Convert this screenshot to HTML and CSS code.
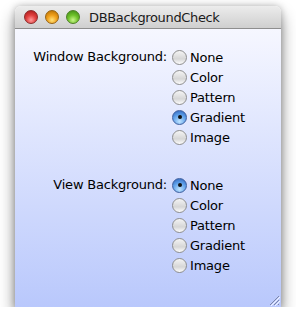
FILE: index.html
```html
<!DOCTYPE html>
<html lang="en">
<head>
    <meta charset="UTF-8">
    <title>DBBackgroundCheck</title>
    <link rel="stylesheet" href="styles.css">
</head>
<body>
    <div class="window">
        <div class="titlebar">
            <div class="lights">
                <span class="light red"></span>
                <span class="light yellow"></span>
                <span class="light green"></span>
            </div>
            <div class="title">DBBackgroundCheck</div>
        </div>

        <div class="content">
            <div class="group">
                <div class="label">Window Background:</div>
                <div class="options">
                    <div class="option"><span class="radio"></span>None</div>
                    <div class="option"><span class="radio"></span>Color</div>
                    <div class="option"><span class="radio"></span>Pattern</div>
                    <div class="option"><span class="radio on"></span>Gradient</div>
                    <div class="option"><span class="radio"></span>Image</div>
                </div>
            </div>

            <div class="group">
                <div class="label">View Background:</div>
                <div class="options">
                    <div class="option"><span class="radio on"></span>None</div>
                    <div class="option"><span class="radio"></span>Color</div>
                    <div class="option"><span class="radio"></span>Pattern</div>
                    <div class="option"><span class="radio"></span>Gradient</div>
                    <div class="option"><span class="radio"></span>Image</div>
                </div>
            </div>

            <svg class="grip" width="12" height="12" viewBox="0 0 12 12">
                <path d="M11 2 L2 11 M11 6 L6 11 M11 10 L10 11" stroke="#7d86a8" stroke-width="1"/>
                <path d="M12 3 L3 12 M12 7 L7 12" stroke="#f2f4ff" stroke-width="1"/>
            </svg>
        </div>
    </div>
</body>
</html>
```

FILE: styles.css
```css
body {
    margin: 0;
    background: #fff;
    font-family: "DejaVu Sans", sans-serif;
    font-size: 13px;
    letter-spacing: -0.2px;
    color: #000;
}
.window {
    margin: 6px 0 0 15px;
    width: 266px;
    border-radius: 6px 6px 0 0;
    box-shadow: 0 9px 16px rgba(0, 0, 0, 0.45), 0 0 7px rgba(0, 0, 0, 0.25);
}
.titlebar {
    height: 23px;
    display: flex;
    align-items: center;
    border-radius: 6px 6px 0 0;
    background: linear-gradient(#ececec, #cfcfcf);
    border-bottom: 1px solid #8e8e8e;
    box-sizing: border-box;
}
.lights {
    display: flex;
    gap: 7px;
    padding-left: 9px;
}
.light {
    width: 14px;
    height: 14px;
    border-radius: 50%;
    box-sizing: border-box;
}
.red {
    background: radial-gradient(circle at 50% 75%, #ff9a9a 0, #e0403f 45%, #a31414 100%);
    border: 1px solid #8a2a2a;
}
.yellow {
    background: radial-gradient(circle at 50% 75%, #ffe27a 0, #f0a01c 45%, #b06a00 100%);
    border: 1px solid #966314;
}
.green {
    background: radial-gradient(circle at 50% 75%, #c9f58a 0, #6fc22a 45%, #3a8412 100%);
    border: 1px solid #4e7f27;
}
.title {
    margin-left: 9px;
    font-size: 13px;
    letter-spacing: -0.35px;
    color: #1a1a1a;
}
.content {
    position: relative;
    height: 278px;
    padding-top: 18px;
    box-sizing: border-box;
    background: linear-gradient(#f6f7ff, #b9c8fc);
}
.group {
    display: grid;
    grid-template-columns: 157px auto;
    margin-bottom: 28px;
}
.label {
    text-align: right;
    padding-right: 5px;
    line-height: 20px;
}
.options {
    display: flex;
    flex-direction: column;
}
.option {
    display: flex;
    align-items: center;
    height: 20px;
    gap: 3px;
}
.radio {
    width: 15px;
    height: 15px;
    border-radius: 50%;
    box-sizing: border-box;
    border: 1px solid #8d8d8d;
    background: linear-gradient(#f4f4f4, #d6d6d6 60%, #fdfdfd);
    position: relative;
}
.radio.on {
    border-color: #3d5e9e;
    background: radial-gradient(circle at 50% 80%, #bfe4ff 0, #5c9ee8 55%, #2d5fb6 100%);
}
.radio.on::after {
    content: "";
    position: absolute;
    left: 4.5px;
    top: 4.5px;
    width: 4px;
    height: 4px;
    border-radius: 50%;
    background: #111;
}
.grip {
    position: absolute;
    right: 1px;
    bottom: 1px;
}
```
